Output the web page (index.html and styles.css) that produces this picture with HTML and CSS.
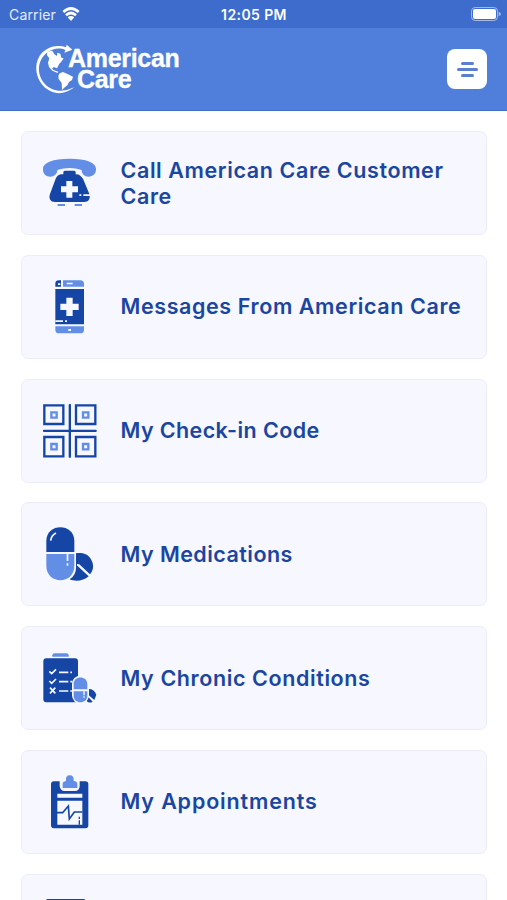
FILE: index.html
```html
<!DOCTYPE html>
<html lang="en">
	<head>
		<meta charset="utf-8">
		<meta name="viewport" content="width=device-width, initial-scale=1">
		<title>American Care</title>
		<link rel="stylesheet" href="styles.css">
	</head>

	<body>
		<div class="status">
			<div class="carrier">
				<span>Carrier</span>
				<svg class="wifi" viewBox="0 0 54 42">
					<path d="M4 15Q27-6 50 15" stroke-width="8"/>
					<path d="M12 25Q27 11 42 25" stroke-width="8"/>
					<path class="dot" d="M17 31Q27 23 37 31L27 42z"/>
				</svg>
			</div>
			<div class="time">12:05 PM</div>
			<svg class="battery" viewBox="0 0 90 42">
				<rect class="outline" x="1.5" y="1.5" width="78" height="39" rx="11"/>
				<rect x="6" y="6" width="69" height="30" rx="6"/>
				<path class="tip" d="M83 14Q90 17 90 21Q90 25 83 28z"/>
			</svg>
		</div>

		<header class="header">
			<div class="logo">
				<svg class="globe" viewBox="0 0 120 150">
					<path class="ring" d="M93 10C60-3 14 14 5 58C-4 109 37 152 79 147Q100 144 118 130Q97 140 78 140C37 141 5 103 13 62C21 25 62 4 91 18L88 26L112 17L95 2z"/>
					<path d="M37 23L52 20L58 31L66 36L67 26L76 29L79 41L86 43L80 52L72 61L66 73L56 69L51 74L57 79L70 83L68 87L52 80L42 69L39 56L43 43L36 34z"/>
					<path d="M74 88L84 84L99 91L114 98L111 108L102 114L97 124L87 132L81 138L80 117L71 105L70 95z"/>
				</svg>
				<div class="name">
					<div>American</div>
					<div class="care">Care</div>
				</div>
			</div>
			<button class="menu" aria-label="Menu">
				<i></i>
				<i class="long"></i>
				<i></i>
			</button>
		</header>

		<main class="list">
			<a class="card">
				<svg class="icon" viewBox="0 0 162 162">
					<path class="light" d="M0 38C0 20 30 8 80 8S159 20 159 38C160 54 149 62 137 62C124 62 116 54 116 42Q80 30 43 42C43 54 34 62 22 62C9 62-1 54 0 38z"/>
					<path class="dark" d="M61 55V48Q62 44 67 44H92Q97 44 98 48V55Q107 55 112 59L120 68L139 114C143 128 137 138 123 138H36C23 138 16 128 21 114L38 68Q44 56 54 55z"/>
					<path class="white" d="M70 75H88V91H105V109H88V125H70V109H54V91H70z"/>
					<path class="white" d="M109 115h6v5h-6zM121 115h21v5h-21z"/>
					<path class="light" d="M44 144h22v6h-22zM95 144h22v6h-22z"/>
				</svg>
				<h2 class="call">Call American Care Customer Care</h2>
			</a>
			<a class="card">
				<svg class="icon" viewBox="0 0 162 162">
					<path class="dark" d="M37 20V11Q37 1 48 1H54V20zM37 27H123V133H37z"/>
					<path class="light" d="M60 1H112Q123 1 123 12V20H60zM37 139H123V149Q123 160 112 160H48Q37 160 37 149z"/>
					<path class="white" d="M71 8h18v5h-18zM45 10h7v5h-7zM76 147h8v6h-8zM37 121h23v5h-23zM66 121h6v5h-6z"/>
					<path class="white" d="M70 53H89V71H107V90H89V108H70V90H52V71H70z"/>
				</svg>
				<h2 class="messages">Messages From American Care</h2>
			</a>
			<a class="card">
				<svg class="icon" viewBox="0 0 162 162">
					<g class="line">
						<path d="M80.500 3V158M3 80.500H158" stroke-linecap="round"/>
						<path d="M4 4H61V60H4zM99 4H157V60H99zM4 99H61V157H4zM99 99H157V157H99z"/>
					</g>
					<path class="line pale" d="M25 25H41V41H25zM120 25H136V41H120zM25 120H41V136H25zM120 120H136V136H120z"/>
				</svg>
				<h2 class="code">My Check-in Code</h2>
			</a>
			<a class="card">
				<svg class="icon" viewBox="0 0 162 162">
					<path class="dark" d="M99 79C116 76 133 80 143 95C154 112 152 129 141 142L108 111L103 116L137 148C122 162 97 165 80 157Q101 145 99 116z"/>
					<path class="dark" d="M10 75V42C10-13 94-13 94 42V75z"/>
					<path class="light" d="M10 81H94V116C94 174 10 174 10 116z"/>
					<path class="gloss" d="M23 41Q25 25 39 18"/>
					<path class="white" d="M71 81h5v21h-5zM71 109h5v7h-5zM102 111h5v6h-5z"/>
				</svg>
				<h2 class="medications">My Medications</h2>
			</a>
			<a class="card">
				<svg class="icon" viewBox="0 0 162 162">
					<path class="light" d="M28 17V13Q28 7 35 7H70Q77 7 77 13V17z"/>
					<rect class="dark" x="1" y="22" width="104" height="132" rx="9"/>
					<path class="tick" d="M19 61L26 68L39 55M19 90L26 97L39 84M21 110L37 127M37 110L21 127M48 64H76M82 64H87M48 92H76M82 92H87M48 120H76M82 120H87"/>
					<path class="dark" d="M137 114Q154 114 160 131L154 147L133 129zM136 138L149 152Q140 158 131 151z"/>
					<rect class="white" x="87" y="74" width="51" height="84" rx="25"/>
					<path class="light" d="M92 115V99C92 73 133 73 133 99V115zM92 121H133V134C133 160 92 160 92 134z"/>
					<path class="white" d="M121 121h4v12h-4zM121 136h4v4h-4z"/>
				</svg>
				<h2 class="conditions">My Chronic Conditions</h2>
			</a>
			<a class="card">
				<svg class="icon" viewBox="0 0 162 162">
					<path class="dark" d="M33 19H50V34Q52 48 65 48H96Q109 48 110 34V19H127Q136 19 136 28V151Q136 160 127 160H33Q24 160 24 151V28Q24 19 33 19z"/>
					<path class="light" d="M59 39V25Q60 19 69 18Q67 1 80 1Q94 1 92 18Q103 19 103 27V39z"/>
					<path class="white" d="M43 56h75v12h-75zM43 77h75v72h-75z"/>
					<path class="line pulse" d="M42 113H59L76 93L79 132L94 111H118"/>
					<path class="line thin" d="M109 125v7M109 136v13"/>
				</svg>
				<h2 class="appointments">My Appointments</h2>
			</a>
			<a class="card">
				<svg class="icon" viewBox="0 0 162 162">
					<path class="dark" d="M14 0H122Q127 0 127 6V160H9V6Q9 0 14 0z"/>
				</svg>
			</a>
		</main>
	</body>
</html>
```
FILE: styles.css
```css
* {
	box-sizing: border-box;
}

body {
	margin: 0;
	background-color: #fff;
	font-family: Inter, sans-serif;
}

svg {
	display: block;
	flex: none;
}

/* status bar */
.status {
	display: grid;
	grid-template-columns: 1fr auto 1fr;
	align-items: center;
	height: 28px;
	padding: 0 8px 0 9px;
	background-color: #3e6ccc;
	color: #fff;
	font-size: 14px;
}

.carrier {
	display: flex;
	align-items: center;
	gap: 6px;
	color: #e5edff;
	letter-spacing: .15px;
}

.wifi {
	width: 18px;
	height: 14px;
	fill: none;
	stroke: #fff;
}

.wifi .dot {
	fill: #fff;
	stroke: none;
}

.time {
	font-weight: 600;
	letter-spacing: .4px;
}

.battery {
	width: 30px;
	height: 14px;
	margin-right: -2px;
	justify-self: end;
	fill: #fff;
}

.battery .outline {
	fill: none;
	stroke: #a3b9e9;
	stroke-width: 3;
}

.battery .tip {
	fill: #a3b9e9;
}

/* header */
.header {
	display: flex;
	align-items: center;
	justify-content: space-between;
	height: 83px;
	padding: 0 20px 0 35px;
	background-color: #507fdb;
	border-bottom: 1px solid #3f70cd;
}

.logo {
	display: flex;
	align-items: center;
}

.globe {
	width: 40px;
	height: 50px;
	fill: #fff;
}

.name {
	margin-left: -7px;
	color: #fff;
	font: bold 25px/21px "Liberation Sans", sans-serif;
	letter-spacing: -.3px;
	-webkit-text-stroke: .3px #fff;
}

.care {
	margin-left: 9px;
}

.menu {
	display: flex;
	flex-direction: column;
	align-items: center;
	justify-content: center;
	gap: 3px;
	width: 40px;
	height: 40px;
	padding: 0;
	border: 0;
	border-radius: 8px;
	background-color: #fff;
}

.menu i {
	width: 13px;
	height: 3px;
	border-radius: 2px;
	background-color: #5a7fd0;
}

.menu .long {
	width: 21px;
}

/* cards */
.list {
	display: flex;
	flex-direction: column;
	gap: 19.8px;
	height: 789px;
	padding: 20px 20px 0 21px;
	overflow: hidden;
}

.card {
	display: flex;
	flex: none;
	align-items: center;
	gap: 23.5px;
	height: 104px;
	padding: 0 20px 0 21px;
	border: 1px solid #ecedfb;
	border-radius: 7px;
	background-color: #f6f7ff;
}

.icon {
	width: 54px;
	height: 54px;
}

.dark {
	fill: #1545a5;
}

.light {
	fill: #638ee5;
}

.white {
	fill: #f6f7ff;
}

.line {
	fill: none;
	stroke: #1545a5;
	stroke-width: 7;
}

.pale {
	stroke: #638ee5;
}

.pulse {
	stroke-width: 5;
}

.thin {
	stroke-width: 4;
}

.gloss, .tick {
	fill: none;
	stroke: #f6f7ff;
	stroke-width: 5;
}

h2 {
	margin: 0 0 1px;
	color: #1b469f;
	font-size: 21.5px;
	font-weight: 600;
	line-height: 26px;
	letter-spacing: .6px;
	white-space: nowrap;
}

h2.call {
	white-space: normal;
}

h2.code {
	letter-spacing: .4px;
}

h2.medications {
	letter-spacing: .45px;
}

h2.appointments {
	letter-spacing: .85px;
}
```
